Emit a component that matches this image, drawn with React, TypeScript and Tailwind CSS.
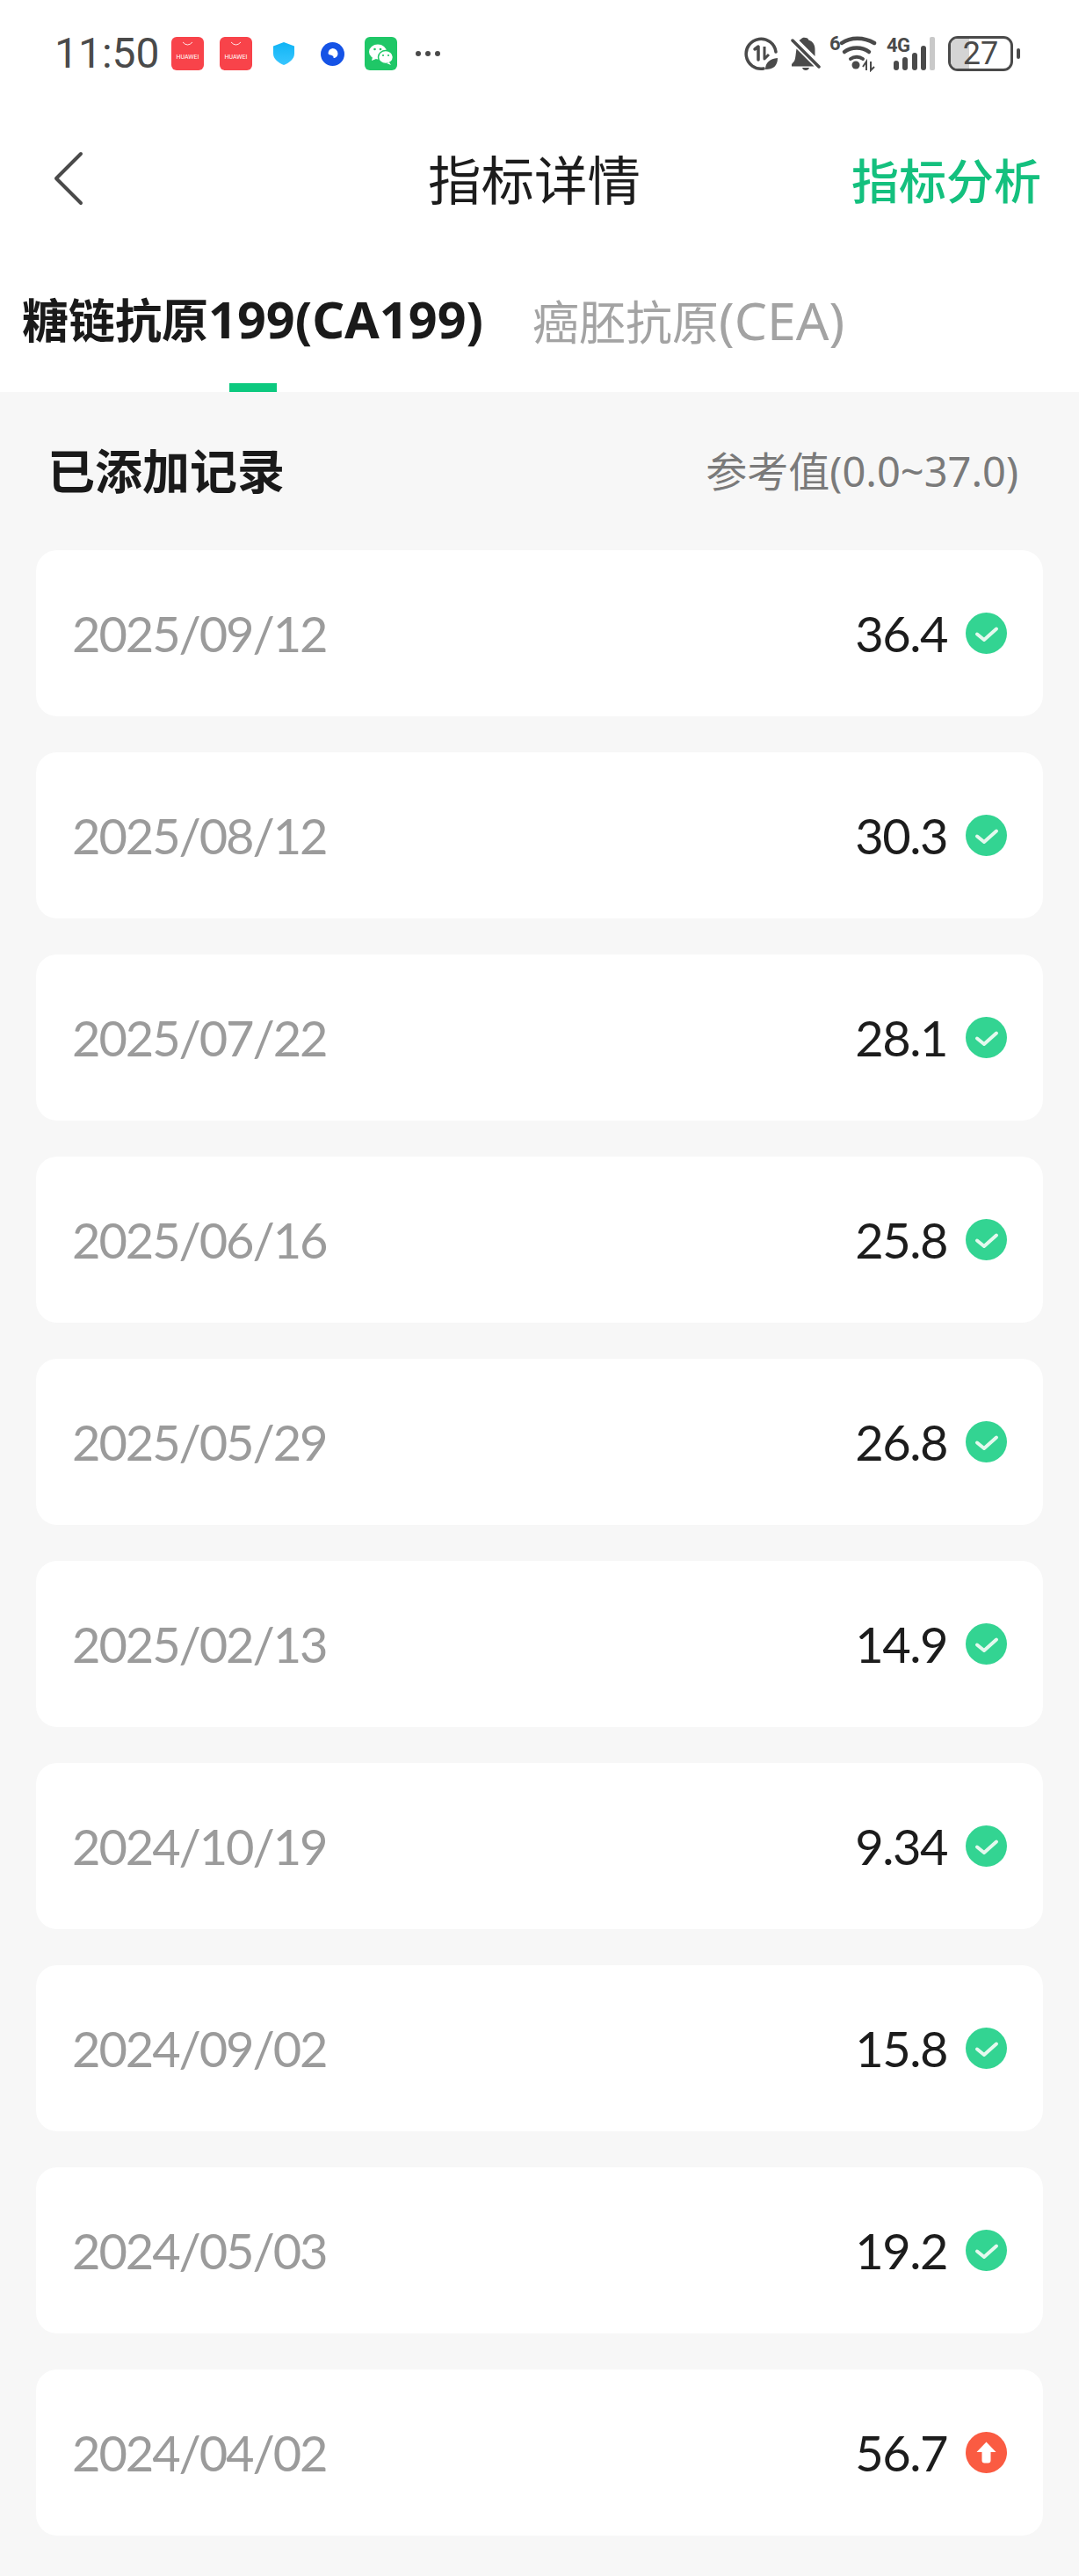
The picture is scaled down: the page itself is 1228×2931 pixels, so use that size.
const CJK = "font-['Noto_Sans','Noto_Sans_CJK_SC',sans-serif]";

const RECORDS = [
  { date: '2025/09/12', value: '36.4', high: false },
  { date: '2025/08/12', value: '30.3', high: false },
  { date: '2025/07/22', value: '28.1', high: false },
  { date: '2025/06/16', value: '25.8', high: false },
  { date: '2025/05/29', value: '26.8', high: false },
  { date: '2025/02/13', value: '14.9', high: false },
  { date: '2024/10/19', value: '9.34', high: false },
  { date: '2024/09/02', value: '15.8', high: false },
  { date: '2024/05/03', value: '19.2', high: false },
  { date: '2024/04/02', value: '56.7', high: true },
];

function HuaweiIcon({ className }: { className?: string }) {
  return (
    <svg viewBox="0 0 37 38" className={`w-[37px] h-[38px] ${className ?? ''}`}>
      <rect width="37" height="38" rx="6" fill="#f8434a" />
      <path d="M13 6q5.500 6 11 0" fill="none" stroke="#fff" strokeWidth="1" opacity="0.85" />
      <text x="18.500" y="25" textAnchor="middle" fontSize="7" fontFamily="Roboto, sans-serif" fill="#fff">
        HUAWEI
      </text>
    </svg>
  );
}

function ShieldIcon() {
  return (
    <svg viewBox="0 0 26 26" className="w-[26px] h-[26px] ml-[23px]">
      <defs>
        <linearGradient id="shield" x1="0" y1="0" x2="0" y2="1">
          <stop offset="0" stopColor="#10b4f5" />
          <stop offset="1" stopColor="#38c6ff" />
        </linearGradient>
      </defs>
      <path d="M13 0l12 4.500v8.500c0 6-5.500 10.500-12 13-6.500-2.500-12-7-12-13v-8.500z" fill="url(#shield)" />
    </svg>
  );
}

function BlueRingIcon() {
  return (
    <svg viewBox="0 0 27 27" className="w-[27px] h-[27px] ml-[29px]">
      <circle cx="13.500" cy="13.500" r="13.500" fill="#1553e6" />
      <path d="M13.500 7a6 6 0 0 1 6 6c0 3-2.500 5-5 5 .5-1.500-.5-2.500-2-3-2-.5-4-1-4-2.500a6 6 0 0 1 5-5.500z" fill="#fff" />
    </svg>
  );
}

function WechatIcon() {
  return (
    <svg viewBox="0 0 37 38" className="w-[37px] h-[38px] ml-[23px]">
      <rect width="37" height="38" rx="6" fill="#1fc767" />
      <ellipse cx="15" cy="17" rx="10" ry="8.500" fill="#fff" />
      <path d="M9 23l-1 4 5-2z" fill="#fff" />
      <ellipse cx="24" cy="23" rx="8.500" ry="7.500" fill="#fff" stroke="#1fc767" strokeWidth="1.500" />
      <path d="M28 29l2 3-5-2z" fill="#fff" />
      <circle cx="11.500" cy="14" r="1.300" fill="#1fc767" />
      <circle cx="18" cy="14" r="1.300" fill="#1fc767" />
      <circle cx="21" cy="21" r="1.100" fill="#1fc767" />
      <circle cx="27" cy="21" r="1.100" fill="#1fc767" />
    </svg>
  );
}

function SaverIcon() {
  return (
    <svg viewBox="0 0 40 40" className="w-[40px] h-[40px]" fill="none" stroke="#4a4a4a">
      <path d="M36 18A17 17 0 1 0 22 37" strokeWidth="3.500" strokeLinecap="round" />
      <path d="M12 15l4-3v15" strokeWidth="3.500" strokeLinecap="round" strokeLinejoin="round" />
      <path d="M23 12v14l5-5" strokeWidth="3" strokeLinejoin="round" />
      <path d="M24 38c0-8 5-12 14-13 0 9-5 13-14 13z" fill="#4a4a4a" stroke="none" />
    </svg>
  );
}

function MutedBellIcon() {
  return (
    <svg viewBox="0 0 34 38" className="w-[34px] h-[38px] ml-[13px]">
      <path d="M17 1c1.800 0 3 1 3.200 2.500 5 1.500 7.300 5.500 7.300 10.500v8l-18-18c2-1.500 3.500-2.800 4.300-3 .2-.3 1.600 0 3.200 0z" fill="#4a4a4a" />
      <path d="M6.500 13.500l20 20H1v-2.500l3-3.500c1.500-3 1.500-8 2.500-14z" fill="#4a4a4a" />
      <path d="M13 35h8c-.5 2-2 3-4 3s-3.500-1-4-3z" fill="#4a4a4a" />
      <path d="M2 4l30 30" stroke="#4a4a4a" strokeWidth="3.500" strokeLinecap="round" />
    </svg>
  );
}

function WifiIcon() {
  return (
    <div className="relative w-[54px] h-[42px] ml-[10px]">
      <span className="absolute left-0 top-[-3px] text-[22px] leading-[26px] font-bold text-[#4a4a4a] font-['Roboto',sans-serif]">
        6
      </span>
      <svg viewBox="0 0 54 42" className="absolute inset-0 w-[54px] h-[42px]" fill="none" stroke="#4a4a4a" strokeLinecap="round">
        <path d="M14 9c10-7 25-7 37 0" strokeWidth="4.500" />
        <path d="M17 19c8-6 20-6 28 0" strokeWidth="4.500" />
        <path d="M24 27c4-3 10-3 14 0" strokeWidth="4" />
        <circle cx="30" cy="34" r="4.500" fill="#4a4a4a" stroke="none" />
        <path d="M38 36l4-6v10M47 30v10l4-4" strokeWidth="2" strokeLinecap="butt" />
      </svg>
    </div>
  );
}

function SignalIcon() {
  return (
    <div className="relative w-[55px] h-[40px] ml-[11px]">
      <span className="absolute left-0 top-[-2px] text-[22px] leading-[26px] font-bold tracking-[-0.5px] text-[#4a4a4a] font-['Roboto',sans-serif]">
        4G
      </span>
      <svg viewBox="0 0 55 40" className="absolute inset-0 w-[55px] h-[40px]" fill="#4a4a4a">
        <rect x="8" y="28" width="6" height="11" rx="3" />
        <rect x="18" y="24" width="6" height="15" rx="3" />
        <rect x="29" y="19" width="6" height="20" rx="3" />
        <rect x="39" y="11" width="6" height="28" rx="3" />
        <rect x="49" y="1" width="6" height="38" rx="2" fill="#c9c9c9" />
      </svg>
    </div>
  );
}

function Battery() {
  return (
    <div className="flex items-center ml-[15px]">
      <div className="relative w-[74px] h-[40px] rounded-[11px] border-[3px] border-[#4a4a4a] overflow-hidden flex items-center justify-center">
        <div className="absolute left-0 top-0 bottom-0 w-[21px] bg-[#d4d4d4]" />
        <span className="relative text-[36px] leading-none text-[#4a4a4a] font-['Roboto',sans-serif]">27</span>
      </div>
      <div className="w-[4px] h-[12px] rounded-[2px] bg-[#4a4a4a] ml-[4px]" />
    </div>
  );
}

function StatusIcon({ high }: { high: boolean }) {
  if (high) {
    return (
      <svg viewBox="0 0 47 47" className="w-[47px] h-[47px] ml-[21px] shrink-0">
        <circle cx="23.500" cy="23.500" r="23.500" fill="#fa5b42" />
        <path d="M23.500 11.500l11 11.500h-6v9.500q0 3-3 3h-4q-3 0-3-3v-9.500h-6z" fill="#fff" />
      </svg>
    );
  }
  return (
    <svg viewBox="0 0 47 47" className="w-[47px] h-[47px] ml-[21px] shrink-0">
      <circle cx="23.500" cy="23.500" r="23.500" fill="#33d492" />
      <path d="M13 24.500l8 6.500 14-12.500" fill="none" stroke="#e4f9ee" strokeWidth="4" strokeLinecap="round" strokeLinejoin="round" />
    </svg>
  );
}

export default function App() {
  return (
    <div className={`w-[1228px] h-[2931px] bg-[#f7f7f7] overflow-hidden ${CJK}`}>
      <div className="bg-white h-[446px]">
        {/* Status bar */}
        <div className="h-[122px] flex items-center pl-[62px] pr-[67px]">
          <span className="w-[126px] text-[48px] leading-none text-[#4a4a4a] font-['Roboto',sans-serif]">11:50</span>
          <HuaweiIcon className="ml-[7px]" />
          <HuaweiIcon className="ml-[18px]" />
          <ShieldIcon />
          <BlueRingIcon />
          <WechatIcon />
          <div className="flex gap-[5px] ml-[21px]">
            <span className="size-[6px] rounded-full bg-[#4a4a4a]" />
            <span className="size-[6px] rounded-full bg-[#4a4a4a]" />
            <span className="size-[6px] rounded-full bg-[#4a4a4a]" />
          </div>
          <div className="ml-auto flex items-center">
            <SaverIcon />
            <MutedBellIcon />
            <WifiIcon />
            <SignalIcon />
            <Battery />
          </div>
        </div>

        {/* Nav */}
        <div className="h-[162px] grid grid-cols-[487px_242px_1fr] items-center">
          <svg viewBox="0 0 36 62" className="w-[36px] h-[62px] ml-[59px]" fill="none">
            <path d="M33 3L5 31l28 28" stroke="#4a4a4a" strokeWidth="4" strokeLinecap="round" strokeLinejoin="round" />
          </svg>
          <h1 className="text-[60.500px] leading-none font-normal text-[#1c1c1c] whitespace-nowrap pt-[5px]">指标详情</h1>
          <div className="text-right pr-[43px] text-[54px] leading-none font-medium text-[#14c07e] whitespace-nowrap pt-[5px]">指标分析</div>
        </div>

        {/* Tabs */}
        <div className="h-[162px] flex pl-[25px] gap-[56px]">
          <div className="relative h-[162px] flex items-center pb-[2px]">
            <span className="text-[53px] leading-none font-bold text-[#1a1a1a] whitespace-nowrap">
              糖链抗原<span className="text-[57.500px]">199(CA199)</span>
            </span>
            <span className="absolute left-[236px] bottom-0 w-[54px] h-[10px] bg-[#0cc97f]" />
          </div>
          <div className="h-[162px] flex items-center pb-[2px]">
            <span className="text-[53px] leading-none text-[#a3a3a3] whitespace-nowrap">
              癌胚抗原<span className="text-[59px]">(CEA)</span>
            </span>
          </div>
        </div>
      </div>

      {/* Section header */}
      <div className="h-[180px] flex items-center justify-between pl-[54px] pr-[69px]">
        <span className="text-[54px] leading-none font-bold text-[#1a1a1a]">已添加记录</span>
        <span className="text-[47px] leading-none text-[#7a7a7a]">参考值(0.0~37.0)</span>
      </div>

      {/* Records */}
      <div className="flex flex-col gap-[41px] mx-[41px]">
        {RECORDS.map((r) => (
          <div key={r.date} className="h-[189px] bg-white rounded-[24px] flex items-center pl-[41px] pr-[41px]">
            <span className="text-[56px] leading-none tracking-[-2.100px] pt-[1px] text-[#9b9b9b] font-['Lato',sans-serif]">{r.date}</span>
            <span className="ml-auto text-[56px] leading-none tracking-[-1.500px] pt-[1px] text-[#1c1c1c] font-['Lato',sans-serif]">{r.value}</span>
            <StatusIcon high={r.high} />
          </div>
        ))}
      </div>
    </div>
  );
}
